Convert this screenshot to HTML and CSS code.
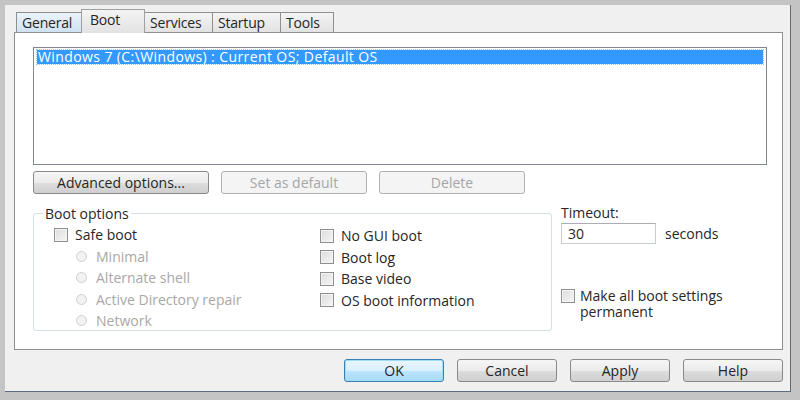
FILE: index.html
```html
<!DOCTYPE html>
<html lang="en">
<head>
  <meta charset="UTF-8">
  <title>System Configuration</title>
  <link rel="stylesheet" href="styles.css">
</head>

<body>
  <div class="dialog">
    <!-- Tabs -->
    <div class="tabs">
      <div class="tab first">General</div>
      <div class="tab active">Boot</div>
      <div class="tab">Services</div>
      <div class="tab">Startup</div>
      <div class="tab">Tools</div>
    </div>

    <div class="panel">
      <!-- OS list -->
      <div class="os-list">
        <div class="os-item selected">Windows 7 (C:\Windows) : Current OS; Default OS</div>
      </div>

      <div class="list-buttons">
        <button class="btn adv">Advanced options...</button>
        <button class="btn" disabled>Set as default</button>
        <button class="btn" disabled>Delete</button>
      </div>

      <div class="options-area">
        <!-- Boot options group -->
        <fieldset class="group">
          <legend>Boot options</legend>
          <div class="group-cols">
            <div class="col left-col">
              <label class="check"><span class="box"></span>Safe boot</label>
              <label class="radio"><span class="dot"></span>Minimal</label>
              <label class="radio"><span class="dot"></span>Alternate shell</label>
              <label class="radio"><span class="dot"></span>Active Directory repair</label>
              <label class="radio"><span class="dot"></span>Network</label>
            </div>
            <div class="col right-col">
              <label class="check"><span class="box"></span>No GUI boot</label>
              <label class="check"><span class="box"></span>Boot log</label>
              <label class="check"><span class="box"></span>Base video</label>
              <label class="check"><span class="box"></span>OS boot information</label>
            </div>
          </div>
        </fieldset>

        <!-- Timeout -->
        <div class="timeout">
          <div class="timeout-label">Timeout:</div>
          <div class="timeout-row">
            <div class="field">30</div>
            <span>seconds</span>
          </div>
          <label class="check permanent"><span class="box"></span><span>Make all boot settings<br>permanent</span></label>
        </div>
      </div>
    </div>

    <div class="dialog-buttons">
      <button class="btn ok">OK</button>
      <button class="btn">Cancel</button>
      <button class="btn">Apply</button>
      <button class="btn">Help</button>
    </div>
  </div>
</body>
</html>
```

FILE: styles.css
```css
body {
  margin: 0;
  background-color: #c4c4c4;
  font-family: "Open Sans", "Noto Sans", sans-serif;
  font-size: 14px;
  color: #262626;
}
.dialog {
  margin: 5px 9px 0 5px;
  height: 387px;
  background-color: #f0f0f0;
  border-right: 1px solid #5d6b7a;
  border-bottom: 1px solid #5d6b7a;
  box-sizing: border-box;
}
.tabs {
  display: flex;
  align-items: flex-end;
  height: 27px;
  padding-left: 9px;
}
.tab {
  height: 20px;
  line-height: 19px;
  padding: 0 5px;
  border: 1px solid #8e8f8f;
  border-bottom: none;
  background: linear-gradient(#f4f4f4, #e2e2e2);
  box-sizing: border-box;
  margin-left: -1px;
  letter-spacing: -0.2px;
}
.tab.first {
  margin-left: 2px;
  width: 66px;
  background: linear-gradient(#eaf3fb, #cfe2f3);
}
.tab.active {
  height: 24px;
  width: 64px;
  background-color: #fff;
  border-color: #a0a0a0;
  padding-left: 8px;
  line-height: 20px;
  position: relative;
  top: 1px;
  z-index: 1;
}
.tab:nth-child(3) { width: 69px; }
.tab:nth-child(4) { width: 69px; }
.tab:nth-child(5) { width: 54px; }
.panel {
  margin-left: 9px;
  width: 769px;
  height: 318px;
  background-color: #fff;
  border: 1px solid #8e8f8f;
  box-sizing: border-box;
  padding: 14px 15px 0 18px;
}
.os-list {
  height: 118px;
  border: 1px solid #828790;
  box-sizing: border-box;
  padding: 2px 3px;
}
.os-item {
  height: 14px;
  line-height: 13px;
  padding-left: 1px;
}
.os-item.selected {
  background-color: #3399ff;
  color: #fff;
  outline: 1px dotted #9cc9f5;
  letter-spacing: 0.4px;
}
.list-buttons {
  display: flex;
  gap: 12px;
  margin-top: 6px;
}
.btn {
  height: 23px;
  width: 146px;
  font-family: inherit;
  font-size: 14px;
  color: #262626;
  border: 1px solid #8a8a8a;
  border-radius: 3px;
  background: linear-gradient(#f6f6f6 0%, #ebebeb 50%, #dddddd 51%, #cfcfcf 100%);
  padding: 0;
}
.btn.adv {
  width: 176px;
}
.btn:disabled {
  color: #a6a6a6;
  border-color: #adb2b5;
  background: #f4f4f4;
}
.options-area {
  display: flex;
  margin-top: 12px;
}
.group {
  width: 519px;
  height: 125px;
  margin: 0;
  padding: 0 0 0 20px;
  border: 1px solid #d5dfe5;
  border-radius: 3px;
  box-sizing: border-box;
}
.group legend {
  padding: 0 2px;
  margin-left: -11px;
  line-height: 15px;
}
.group-cols {
  display: flex;
  margin-top: 3px;
}
.col {
  display: flex;
  flex-direction: column;
}
.left-col {
  width: 266px;
}
.right-col {
  margin-top: 1px;
}
.check, .radio {
  display: flex;
  align-items: center;
  height: 21.5px;
}
.box {
  width: 14px;
  height: 14px;
  border: 1px solid #8f8f8f;
  background: linear-gradient(135deg, #dcdcdc, #f6f6f6);
  margin-right: 7px;
  box-sizing: border-box;
  box-shadow: inset 0 0 0 1px #f4f4f4;
}
.radio {
  padding-left: 22px;
  color: #a8a8a8;
}
.dot {
  width: 11px;
  height: 11px;
  border: 1px solid #cfcfcf;
  border-radius: 50%;
  background: #f2f2f2;
  margin-right: 9px;
  box-sizing: border-box;
}
.timeout {
  margin-left: 9px;
  display: flex;
  flex-direction: column;
}
.timeout-label {
  margin-top: -1px;
  line-height: 16px;
}
.timeout-row {
  display: flex;
  align-items: center;
  gap: 9px;
  margin-top: 2px;
}
.field {
  width: 95px;
  height: 21px;
  line-height: 20px;
  border: 1px solid #c7cdd2;
  border-top-color: #abadb3;
  box-sizing: border-box;
  padding-left: 6px;
}
.check.permanent {
  align-items: flex-start;
  height: auto;
  line-height: 16px;
  margin-top: 44px;
}
.check.permanent .box {
  margin-top: 1px;
  margin-right: 5px;
}
.dialog-buttons {
  display: flex;
  justify-content: flex-end;
  gap: 13px;
  margin-top: 9px;
  padding-right: 7px;
}
.dialog-buttons .btn {
  width: 100px;
}
.btn.ok {
  border-color: #3c7fb1;
  box-shadow: inset 0 0 0 1px #9fdcf6;
  background: linear-gradient(#eaf6fd 0%, #d9f0fc 50%, #bee6fd 51%, #a7d9f5 100%);
}
```
